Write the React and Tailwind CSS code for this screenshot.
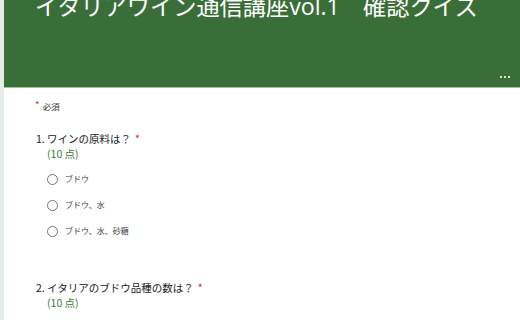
export default function App() {
  const jp = { fontFamily: '"Noto Sans CJK JP", "Noto Sans", sans-serif' };
  const options = ['ブドウ', 'ブドウ、水', 'ブドウ、水、砂糖'];

  return (
    <div className="flex w-[520px] h-[320px] overflow-hidden bg-[#e6ece6]" style={jp}>
      <div className="ml-[4px] flex-1 bg-white flex flex-col">
        {/* Header */}
        <div className="relative h-[88px] shrink-0 bg-[#3a6e39] border-b border-[#9fc39e] pl-[31px]">
          <h1 className="text-white text-[23.2px] leading-[24px] mt-[-7px] whitespace-nowrap">
            イタリアワイン通信講座<span style={{ fontFamily: '"Open Sans", "Noto Sans", sans-serif' }}>vol.1</span>　確認クイズ
          </h1>
          <div className="absolute right-[10px] bottom-[9px] flex gap-[2px]">
            <span className="w-[2px] h-[2px] bg-white/80" />
            <span className="w-[2px] h-[2px] bg-white/80" />
            <span className="w-[2px] h-[2px] bg-white/80" />
          </div>
        </div>

        {/* Required */}
        <div className="pl-[31px] pt-[11px] flex items-start text-[8.5px] text-[#333]">
          <span className="text-[#d93025] mr-[3px] text-[10px] leading-[12px]">*</span>
          <span className="leading-[14px]">必須</span>
        </div>

        {/* Question 1 */}
        <div className="pl-[32px] pt-[18px]">
          <div className="flex items-baseline text-[10.5px] leading-[16px] text-[#202124]">
            <span>1. ワインの原料は？</span>
            <span className="text-[#d93025] ml-[4px]">*</span>
          </div>
          <div className="pl-[11px] text-[10.5px] leading-[14px] text-[#3b7a3a]">(10 点)</div>
          <div className="flex flex-col gap-[10px] pl-[11px] pt-[10px]">
            {options.map((o) => (
              <div key={o} className="flex items-center h-[16px]">
                <span className="w-[11px] h-[11px] rounded-full border-[1.5px] border-[#6f7378]" />
                <span className="ml-[7px] text-[8px] text-[#444]">{o}</span>
              </div>
            ))}
          </div>
        </div>

        {/* Question 2 */}
        <div className="pl-[32px] pt-[41px]">
          <div className="flex items-baseline text-[10.5px] leading-[16px] text-[#202124]">
            <span>2. イタリアのブドウ品種の数は？</span>
            <span className="text-[#d93025] ml-[4px]">*</span>
          </div>
          <div className="pl-[11px] text-[10.5px] leading-[14px] text-[#3b7a3a]">(10 点)</div>
          <div className="pl-[11px] pt-[10px]">
            <span className="block w-[11px] h-[11px] rounded-full border-[1.5px] border-[#6f7378]" />
          </div>
        </div>
      </div>
    </div>
  );
}
